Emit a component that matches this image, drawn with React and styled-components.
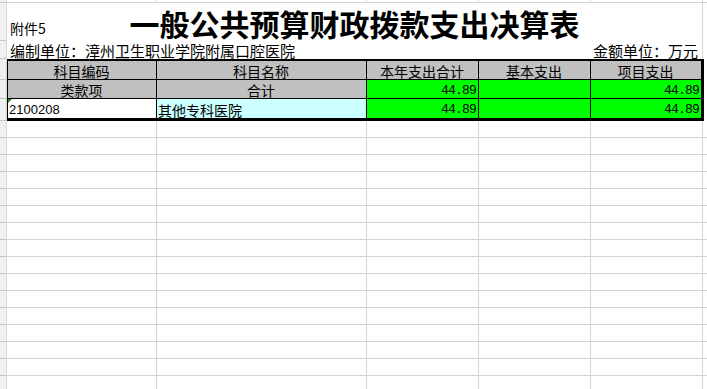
import React from "react";
import styled, { createGlobalStyle } from "styled-components";

const GRID = "#d4d4d4";
const TICK = "#c6c6c6";
const HEAD_BG = "#c0c0c0";
const GREEN = "#00ff00";
const CYAN = "#ccffff";

const GlobalStyle = createGlobalStyle`
  html, body {
    margin: 0;
    padding: 0;
    background: #fff;
  }
  body {
    width: 707px;
    height: 389px;
    overflow: hidden;
    color: #000;
    font-family: "Noto Sans CJK SC", "Liberation Sans", sans-serif;
  }
  * {
    box-sizing: border-box;
  }
`;

const Sheet = styled.div`
  display: flex;
  width: 707px;
  height: 389px;
  overflow: hidden;
`;

const Strip = styled.div`
  display: flex;
  flex-direction: column;
  flex: none;
  width: 7px;
  background: #f0f0f0;
  border-right: 1px solid ${GRID};
`;

const StripCell = styled.div`
  flex: none;
  height: ${(p) => p.$h}px;
  border-bottom: 1px solid ${TICK};
`;

const Body = styled.div`
  flex: 1;
  min-width: 0;
  display: flex;
  flex-direction: column;
`;

const Row = styled.div`
  display: flex;
  flex: none;
  height: ${(p) => p.$h}px;
`;

const Cell = styled.div`
  flex: none;
  width: ${(p) => p.$w}px;
  border-right: 1px solid ${GRID};
  border-bottom: 1px solid ${GRID};
`;

const Filler = styled.div`
  flex: 1;
  border-bottom: ${(p) => (p.$lined ? `1px solid ${GRID}` : "none")};
`;

const TitleCell = styled.div`
  flex: none;
  width: 696px;
  border-right: 1px solid ${GRID};
  display: grid;
  grid-template-columns: 1fr auto 1fr;
  align-items: center;
`;

const Attachment = styled.span`
  align-self: end;
  padding: 0 0 6px 3px;
  font-size: 14px;
  line-height: 1;
`;

const Title = styled.h1`
  margin: 0;
  padding-top: 1px;
  font-size: 30px;
  font-weight: 700;
  line-height: 30px;
  white-space: nowrap;
`;

const InfoCell = styled.div`
  flex: none;
  width: 696px;
  border-right: 1px solid ${GRID};
  display: flex;
  justify-content: space-between;
  align-items: center;
  padding: 1px 4px 0 3px;
  font-size: 15px;
  line-height: 1;
  white-space: nowrap;
`;

const Table = styled.div`
  flex: none;
  width: 697px;
  display: flex;
  flex-direction: column;
  border: 3px solid #000;
  border-top-width: 2px;
  border-left-width: 1px;
`;

const TRow = styled.div`
  display: flex;
  flex: none;
  height: 19px;
  border-bottom: ${(p) => (p.$last ? "none" : "1px solid #000")};
`;

const TCell = styled.div`
  position: relative;
  flex: none;
  width: ${(p) => p.$w}px;
  display: flex;
  align-items: center;
  justify-content: ${(p) => p.$align || "center"};
  padding: ${(p) => (p.$low ? "2px 2px 0 1px" : "1px 2px 0 1px")};
  background: ${(p) => p.$bg || "#fff"};
  border-right: ${(p) => (p.$last ? "none" : "1px solid #000")};
  font-size: 14px;
  line-height: 1;
  white-space: nowrap;
`;

const Amount = styled.span`
  font-family: "Liberation Mono", monospace;
  font-size: 13px;
  letter-spacing: -0.8px;
`;

const Code = styled.span`
  font-family: "Liberation Sans", sans-serif;
  font-size: 13px;
`;

const TextMark = styled.span`
  position: absolute;
  top: 0;
  left: 0;
  width: 0;
  height: 0;
  border-top: 4px solid #1f8a2c;
  border-right: 4px solid transparent;
`;

const COLS = [150, 210, 112, 112, 112];
const TCOLS = [149, 210, 112, 112, 110];
const EMPTY_ROWS = 16;

const tableRows = [
  [
    { text: "科目编码", bg: HEAD_BG },
    { text: "科目名称", bg: HEAD_BG },
    { text: "本年支出合计", bg: HEAD_BG },
    { text: "基本支出", bg: HEAD_BG },
    { text: "项目支出", bg: HEAD_BG },
  ],
  [
    { text: "类款项", bg: HEAD_BG },
    { text: "合计", bg: HEAD_BG },
    { amount: "44.89", bg: GREEN },
    { amount: "", bg: GREEN },
    { amount: "44.89", bg: GREEN },
  ],
  [
    { code: "2100208", bg: "#fff", mark: true },
    { text: "其他专科医院", bg: CYAN, align: "flex-start" },
    { amount: "44.89", bg: GREEN },
    { amount: "", bg: GREEN },
    { amount: "44.89", bg: GREEN },
  ],
];

const stripHeights = [3, 38, 18, 21, 19, 22, ...Array(EMPTY_ROWS).fill(17)];

const GridRow = ({ h }) => (
  <Row $h={h}>
    {COLS.map((w, i) => (
      <Cell key={i} $w={w} />
    ))}
    <Filler $lined />
  </Row>
);

const renderCell = (c, i, rowIndex) => {
  const last = i === TCOLS.length - 1;
  if (c.amount !== undefined) {
    return (
      <TCell key={i} $w={TCOLS[i]} $bg={c.bg} $align="flex-end" $low $last={last}>
        <Amount>{c.amount}</Amount>
      </TCell>
    );
  }
  if (c.code) {
    return (
      <TCell key={i} $w={TCOLS[i]} $bg={c.bg} $align="flex-start" $low $last={last}>
        {c.mark && <TextMark />}
        <Code>{c.code}</Code>
      </TCell>
    );
  }
  return (
    <TCell
      key={i}
      $w={TCOLS[i]}
      $bg={c.bg}
      $align={c.align}
      $low={rowIndex === 2}
      $last={last}
    >
      {c.text}
    </TCell>
  );
};

export default function App() {
  return (
    <>
      <GlobalStyle />
      <Sheet>
        <Strip>
          {stripHeights.map((h, i) => (
            <StripCell key={i} $h={h} />
          ))}
        </Strip>
        <Body>
          <GridRow h={3} />
          <Row $h={38}>
            <TitleCell>
              <Attachment>附件5</Attachment>
              <Title>一般公共预算财政拨款支出决算表</Title>
              <span />
            </TitleCell>
            <Filler />
          </Row>
          <Row $h={18}>
            <InfoCell>
              <span>编制单位：漳州卫生职业学院附属口腔医院</span>
              <span>金额单位：万元</span>
            </InfoCell>
            <Filler />
          </Row>
          <Row $h={62}>
            <Table>
              {tableRows.map((cells, r) => (
                <TRow key={r} $last={r === tableRows.length - 1}>
                  {cells.map((c, i) => renderCell(c, i, r))}
                </TRow>
              ))}
            </Table>
            <Filler />
          </Row>
          {Array.from({ length: EMPTY_ROWS }, (_, i) => (
            <GridRow key={i} h={17} />
          ))}
        </Body>
      </Sheet>
    </>
  );
}
